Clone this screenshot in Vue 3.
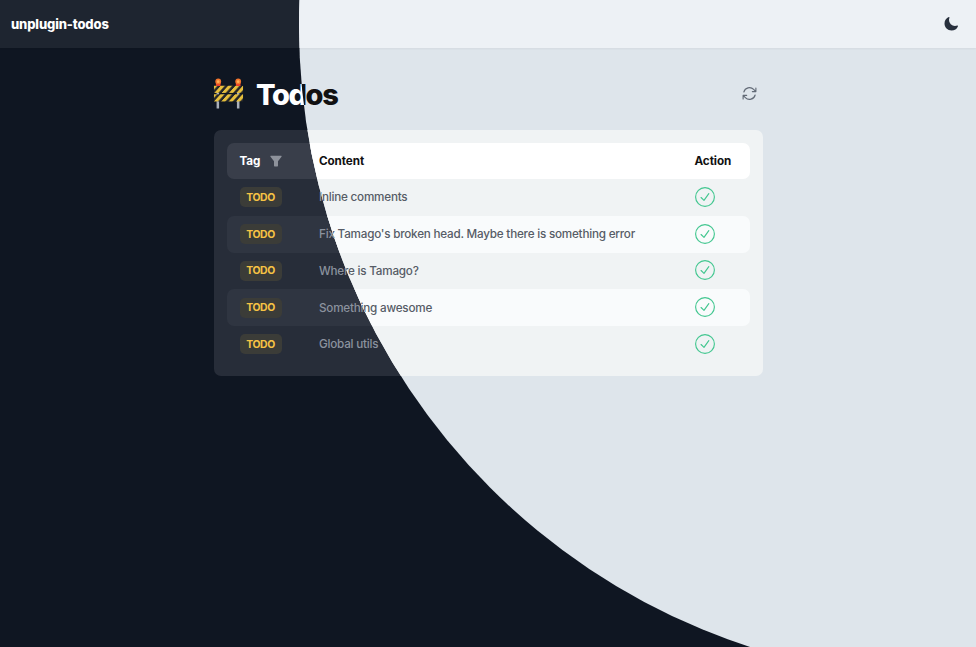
<script setup>
const themes = ['dark', 'light']
const rows = [
  'Inline comments',
  "Fix Tamago's broken head. Maybe there is something error",
  'Where is Tamago?',
  'Something awesome',
  'Global utils'
]
</script>

<template>
  <div class="stage">
    <div v-for="theme in themes" :key="theme" class="page" :class="theme" :aria-hidden="theme === 'dark'">
      <header class="nav">
        <span class="brand">unplugin-todos</span>
        <svg v-if="theme === 'light'" class="moon" viewBox="0 0 24 24">
          <path d="M9.528 1.718a.75.75 0 0 1 .162.819A8.97 8.97 0 0 0 9 6a9 9 0 0 0 9 9 8.97 8.97 0 0 0 3.463-.69.75.75 0 0 1 .981.98 10.503 10.503 0 0 1-9.694 6.46c-5.799 0-10.5-4.7-10.5-10.5 0-4.368 2.667-8.112 6.46-9.694a.75.75 0 0 1 .818.162Z" fill="#28303d" />
        </svg>
      </header>
      <main class="main">
        <div class="heading">
          <svg class="barrier" viewBox="0 0 32 32">
            <defs>
              <pattern :id="'stripes-' + theme" width="7.6" height="40" patternUnits="userSpaceOnUse" patternTransform="skewX(-42)">
                <rect width="7.6" height="40" fill="#25272a" />
                <rect width="4.2" height="40" fill="#e6bf3c" />
              </pattern>
            </defs>
            <path d="M5 8V31.5M26 8V31.5" stroke="#a9afb8" stroke-width="2.6" />
            <rect x="1" y="8" width="30" height="7.4" :fill="`url(#stripes-${theme})`" />
            <rect x="1" y="16.8" width="30" height="7.4" :fill="`url(#stripes-${theme})`" />
            <path d="M3 5H7.8V8.2H3ZM23.6 5H28.4V8.2H23.6Z" fill="#e9412b" />
            <circle cx="5.4" cy="3.5" r="3" fill="#f4752c" />
            <circle cx="26" cy="3.5" r="3" fill="#f4752c" />
            <circle cx="5.4" cy="3.8" r="1.4" fill="#ffb054" />
            <circle cx="26" cy="3.8" r="1.4" fill="#ffb054" />
          </svg>
          <h1 class="title">Todos</h1>
          <svg class="refresh" viewBox="0 0 24 24">
            <path d="M16.023 9.348h4.992V4.356M2.985 19.644v-4.992h4.992m-4.992 0 3.181 3.183a8.25 8.25 0 0 0 13.803-3.7M4.031 9.865a8.25 8.25 0 0 1 13.803-3.7l3.181 3.182" />
          </svg>
        </div>
        <section class="card">
          <div class="row head">
            <div class="tag-head">Tag
              <svg class="funnel" viewBox="0 0 12 12"><path d="M.8.8H11.2Q12 .8 11.5 1.7L8 6.3V10.8Q8 11.4 7.4 11.4H4.6Q4 11.4 4 10.8V6.3L.5 1.7Q0 .8.8.8Z" /></svg>
            </div>
            <div>Content</div>
            <div>Action</div>
          </div>
          <div v-for="row in rows" :key="row" class="row item">
            <div><span class="badge">TODO</span></div>
            <div class="content">{{ row }}</div>
            <div>
              <svg class="check" viewBox="0 0 20 20"><circle cx="10" cy="10" r="9.4" /><path d="M6.1 10.5 9 13.4 13.8 6.6" /></svg>
            </div>
          </div>
        </section>
      </main>
    </div>
  </div>
</template>

<style>
body { margin: 0; overflow: hidden; }
</style>

<style scoped>
.stage { display: grid; width: 976px; height: 647px; overflow: hidden; font-family: Inter, "Liberation Sans", sans-serif; }
.page { grid-area: 1 / 1; min-width: 0; background: var(--bg); color: var(--text); }
.dark {
  --bg: #0f1622; --nav: #1e2530; --text: #fff; --card: #272d39; --head: #393e4a;
  --even: #2f3541; --muted: #8b929e; --badge: #3b3c38; --badge-text: #f6c344;
}
.light {
  --bg: #dee5eb; --nav: #edf1f5; --text: #111; --card: #f0f3f4; --head: #fff;
  --even: #f9fbfc; --muted: #565c66; --badge: #fbf1d3; --badge-text: #dda51f;
  clip-path: circle(653px at 952px 26px);
}
.nav { box-sizing: border-box; height: 48px; padding: 0 17.5px 0 11px; display: flex; align-items: center; justify-content: space-between; background: var(--nav); box-shadow: 0 1px 2px rgb(0 0 0 / 5%); }
.brand { font-size: 13px; line-height: 20px; font-weight: 800; letter-spacing: -.15px; }
.moon { width: 16px; height: 16px; margin-bottom: 1px; }
.main { width: 549px; margin: 0 auto; }
.heading { display: flex; align-items: center; box-sizing: border-box; height: 82px; padding: 9px 5px 0 0; }
.barrier { width: 31px; height: 31px; margin-left: -1px; }
.title { margin: 2px 0 0 12.5px; font-size: 29px; line-height: 36px; font-weight: 800; letter-spacing: -1.4px; }
.refresh { width: 17px; height: 17px; margin-left: auto; fill: none; stroke: #626a76; stroke-width: 1.6; stroke-linecap: round; stroke-linejoin: round; }
.card { box-sizing: border-box; height: 245.5px; padding: 13px; border-radius: 7px; background: var(--card); }
.row { display: grid; grid-template-columns: 79.5px 375.5px 1fr; align-items: center; box-sizing: border-box; padding-left: 13px; border-radius: 7px; height: 36.75px; font-size: 11.7px; }
.head { height: 36px; font-weight: 650; letter-spacing: -.1px; background: var(--head); }
.item:nth-child(odd) { background: var(--even); }
.content { color: var(--muted); font-weight: 550; letter-spacing: -.22px; white-space: nowrap; }
.tag-head { display: flex; align-items: center; gap: 10px; }
.funnel { width: 12px; height: 12px; fill: #8e929b; }
.badge { display: inline-flex; align-items: center; justify-content: center; width: 42px; height: 20px; border-radius: 5px; background: var(--badge); color: var(--badge-text); font-size: 10.4px; font-weight: 700; letter-spacing: -.4px; vertical-align: middle; }
.check { display: block; width: 20px; height: 20px; margin-bottom: 1px; fill: none; stroke: #43c790; stroke-width: 1.15; stroke-linecap: round; stroke-linejoin: round; }
</style>
